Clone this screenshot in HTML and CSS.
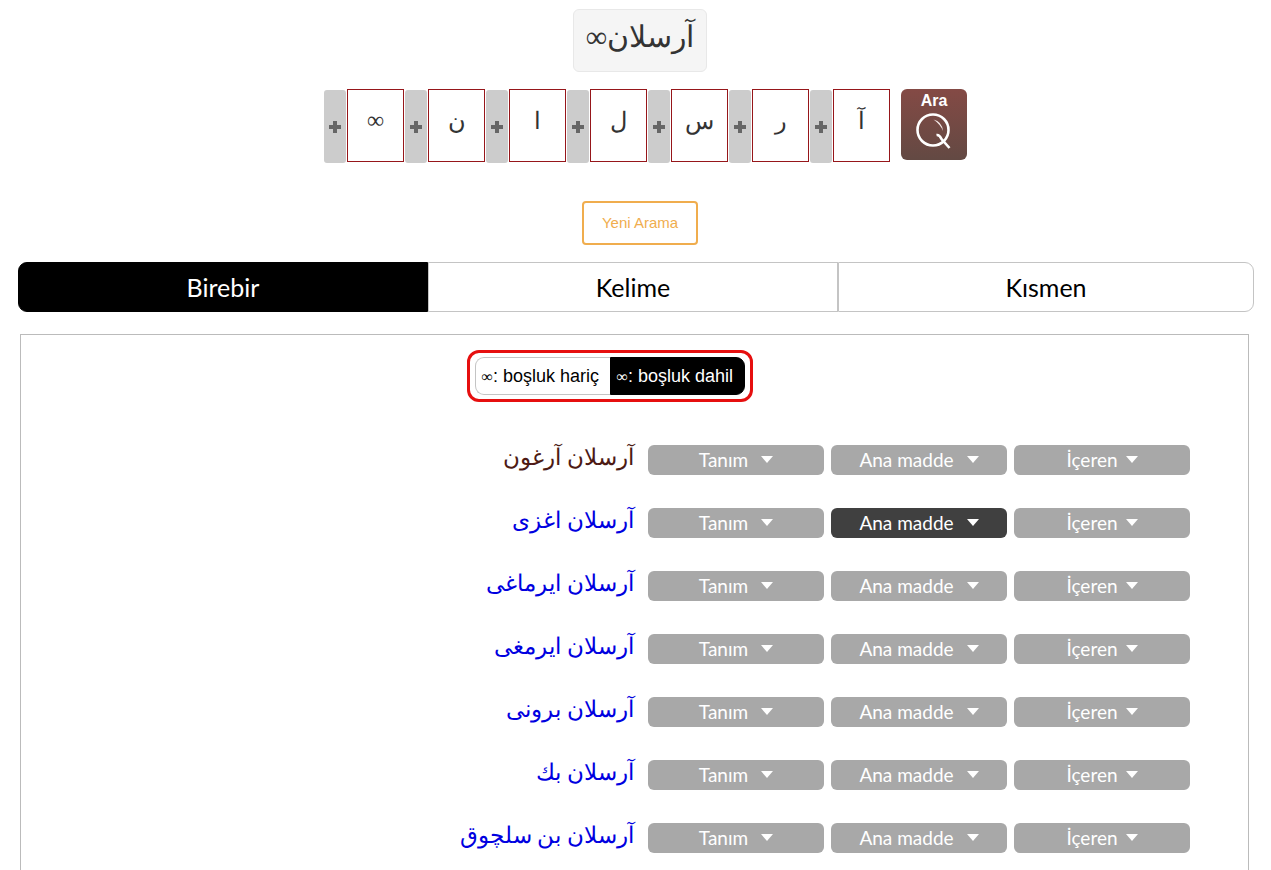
FILE: index.html
```
<!DOCTYPE html>
<html lang="tr">
  <head>
    <meta charset="UTF-8" />
    <meta name="viewport" content="width=device-width, initial-scale=1.0" />
    <title>آرسلان∞</title>
    <link rel="stylesheet" href="styles.css">
  </head>
  <body>
    <header class="search">
      <h1 class="search-word" dir="rtl">آرسلان∞</h1>
      <form class="letters" dir="rtl">
        <button class="search-btn" type="submit">
          <span>Ara</span>
          <svg viewBox="0 0 36 36" aria-hidden="true">
            <circle cx="17" cy="17" r="15.500" fill="none" stroke="#fff" stroke-width="2.600" />
            <path d="M17.500 6.500Q26 8.500 27 18Q24.500 11.500 17.500 6.500Z" fill="#f3e8e6" />
            <path d="M20.500 22Q23.500 21.500 25.500 26L33.500 35" fill="none" stroke="#fff" stroke-width="2.600" />
          </svg>
        </button>
        <input class="letter" type="text" value="آ" aria-label="1. harf">
        <button class="plus" type="button" aria-label="Harf ekle"></button>
        <input class="letter" type="text" value="ر" aria-label="2. harf">
        <button class="plus" type="button" aria-label="Harf ekle"></button>
        <input class="letter" type="text" value="س" aria-label="3. harf">
        <button class="plus" type="button" aria-label="Harf ekle"></button>
        <input class="letter" type="text" value="ل" aria-label="4. harf">
        <button class="plus" type="button" aria-label="Harf ekle"></button>
        <input class="letter" type="text" value="ا" aria-label="5. harf">
        <button class="plus" type="button" aria-label="Harf ekle"></button>
        <input class="letter" type="text" value="ن" aria-label="6. harf">
        <button class="plus" type="button" aria-label="Harf ekle"></button>
        <input class="letter" type="text" value="∞" aria-label="7. harf">
        <button class="plus" type="button" aria-label="Harf ekle"></button>
      </form>
      <button class="new-search" type="button">Yeni Arama</button>
    </header>

    <nav class="tabs">
      <button class="tab active" type="button">Birebir</button>
      <button class="tab" type="button">Kelime</button>
      <button class="tab" type="button">Kısmen</button>
    </nav>

    <main class="panel">
      <div class="space-toggle">
        <button class="space-btn" type="button"><span class="inf">∞</span>: boşluk hariç</button>
        <button class="space-btn active" type="button"><span class="inf">∞</span>: boşluk dahil</button>
      </div>

      <ul class="results">
        <li class="result">
          <a class="word visited" href="#" dir="rtl">آرسلان آرغون</a>
          <button class="drop" type="button">Tanım</button>
          <button class="drop" type="button">Ana madde</button>
          <button class="drop drop-tight" type="button">İçeren</button>
        </li>
        <li class="result">
          <a class="word" href="#" dir="rtl">آرسلان اغزی</a>
          <button class="drop" type="button">Tanım</button>
          <button class="drop drop-on" type="button">Ana madde</button>
          <button class="drop drop-tight" type="button">İçeren</button>
        </li>
        <li class="result">
          <a class="word" href="#" dir="rtl">آرسلان ایرماغی</a>
          <button class="drop" type="button">Tanım</button>
          <button class="drop" type="button">Ana madde</button>
          <button class="drop drop-tight" type="button">İçeren</button>
        </li>
        <li class="result">
          <a class="word" href="#" dir="rtl">آرسلان ایرمغی</a>
          <button class="drop" type="button">Tanım</button>
          <button class="drop" type="button">Ana madde</button>
          <button class="drop drop-tight" type="button">İçeren</button>
        </li>
        <li class="result">
          <a class="word" href="#" dir="rtl">آرسلان برونی</a>
          <button class="drop" type="button">Tanım</button>
          <button class="drop" type="button">Ana madde</button>
          <button class="drop drop-tight" type="button">İçeren</button>
        </li>
        <li class="result">
          <a class="word" href="#" dir="rtl">آرسلان بك</a>
          <button class="drop" type="button">Tanım</button>
          <button class="drop" type="button">Ana madde</button>
          <button class="drop drop-tight" type="button">İçeren</button>
        </li>
        <li class="result">
          <a class="word" href="#" dir="rtl">آرسلان بن سلچوق</a>
          <button class="drop" type="button">Tanım</button>
          <button class="drop" type="button">Ana madde</button>
          <button class="drop drop-tight" type="button">İçeren</button>
        </li>
      </ul>
    </main>
  </body>
</html>
```
FILE: styles.css
```
:root {
  --arabic: "Traditional Arabic", "Liberation Serif", serif;
  --gill: "Gill Sans", Lato, sans-serif;
  --sans: Arial, "Liberation Sans", sans-serif;
  --line: #c4c4c4;
}

* {
  box-sizing: border-box;
}

body {
  margin: 0;
  min-height: 100vh;
  padding: 9px 17px 0 18px;
  display: flex;
  flex-direction: column;
  background: #fff;
  font-family: var(--sans);
}

button,
input {
  margin: 0;
  font-family: inherit;
}

button {
  cursor: pointer;
}

/* search */
.search {
  display: flex;
  flex-direction: column;
  align-items: center;
  padding-left: 8px;
}

.search-word {
  margin: 0 0 17px;
  height: 63px;
  padding: 0 12px;
  border: 1px solid #e8e8e8;
  border-radius: 6px;
  background: #f5f5f5;
  color: #333;
  font-family: var(--arabic);
  font-size: 30px;
  font-weight: 400;
  line-height: 54px;
}

.letters {
  display: flex;
  align-items: flex-start;
  gap: 1px;
  margin: 0 0 38px 11px;
}

.letter {
  width: 57px;
  height: 73px;
  padding: 0 0 10px;
  border: 1px solid #96161a;
  background: #fff;
  color: #333;
  font-family: var(--arabic);
  font-size: 24px;
  text-align: center;
}

.plus {
  display: flex;
  align-items: center;
  justify-content: center;
  width: 22px;
  height: 73px;
  margin-top: 1px;
  padding: 0;
  border: 0;
  border-radius: 3px;
  background: #ccc;
}

.plus::before {
  content: "";
  width: 12px;
  height: 12px;
  background:
    linear-gradient(#666, #666) center / 12px 4px no-repeat,
    linear-gradient(#666, #666) center / 4px 12px no-repeat;
}

.search-btn {
  display: flex;
  flex-direction: column;
  align-items: center;
  width: 66px;
  height: 71px;
  margin-left: 10px;
  padding: 3px 0 0;
  border: 0;
  border-radius: 6px;
  background: linear-gradient(#844a45, #634943);
  color: #fff;
  font-size: 16px;
  font-weight: 700;
  line-height: 18px;
}

.search-btn svg {
  width: 36px;
  height: 36px;
  margin-top: 3px;
}

.new-search {
  height: 44px;
  padding: 0 18px 2px;
  border: 2px solid #f0ad4e;
  border-radius: 4px;
  background: #fff;
  color: #f0ad4e;
  font-size: 15px;
}

/* tabs */
.tabs {
  display: flex;
  height: 50px;
  margin-top: 17px;
}

.tab {
  flex: 1 1 2px;
  padding: 0;
  border: 1px solid var(--line);
  background: #fff;
  color: #000;
  font-family: var(--gill);
  font-size: 25px;
}

.tab:first-child {
  border-radius: 9px 0 0 9px;
}

.tab:last-child {
  flex-basis: 8px;
  border-radius: 0 9px 9px 0;
}

.tab.active,
.space-btn.active {
  border-color: #000;
  background: #000;
  color: #fff;
}

/* results */
.panel {
  flex: 1;
  margin: 22px 5px 0 2px;
  padding: 15px 58px 16px 8px;
  border: 1px solid #bbb;
  border-bottom: 0;
}

.space-toggle {
  display: flex;
  width: fit-content;
  margin: 0 auto;
  padding: 4px 5px;
  border: 3px solid #e60f0f;
  border-radius: 12px;
}

.space-btn {
  height: 38px;
  width: 135px;
  padding: 0 6px;
  border: 1px solid var(--line);
  background: #fff;
  color: #000;
  font-size: 18px;
  text-align: left;
  white-space: nowrap;
}

.space-btn:first-child {
  border-right: 0;
  border-radius: 9px 0 0 9px;
}

.space-btn:last-child {
  border-radius: 0 9px 9px 0;
}

.inf {
  font-family: "Liberation Serif", serif;
  font-size: 16px;
}

.results {
  display: grid;
  gap: 33px;
  margin: 43px 0 0;
  padding: 0;
  list-style: none;
}

.result {
  display: flex;
  align-items: center;
  justify-content: flex-end;
  gap: 7px;
  height: 30px;
}

.word {
  margin-right: 7px;
  padding-bottom: 4px;
  color: #0000e0;
  font-family: var(--arabic);
  font-size: 23px;
  line-height: 30px;
  text-decoration: none;
  white-space: nowrap;
}

.word.visited {
  color: #4d1a14;
}

.drop {
  display: flex;
  align-items: center;
  justify-content: center;
  gap: 13px;
  width: 176px;
  height: 30px;
  padding: 0 0 2px;
  border: 0;
  border-radius: 6px;
  background: #a8a8a8;
  color: #fff;
  font-family: var(--gill);
  font-size: 19px;
}

.drop::after {
  content: "";
  border: 6px solid transparent;
  border-top: 7px solid #fff;
  border-bottom: 0;
}

.drop-tight {
  gap: 8px;
}

.drop-on {
  background: #404040;
}
```
